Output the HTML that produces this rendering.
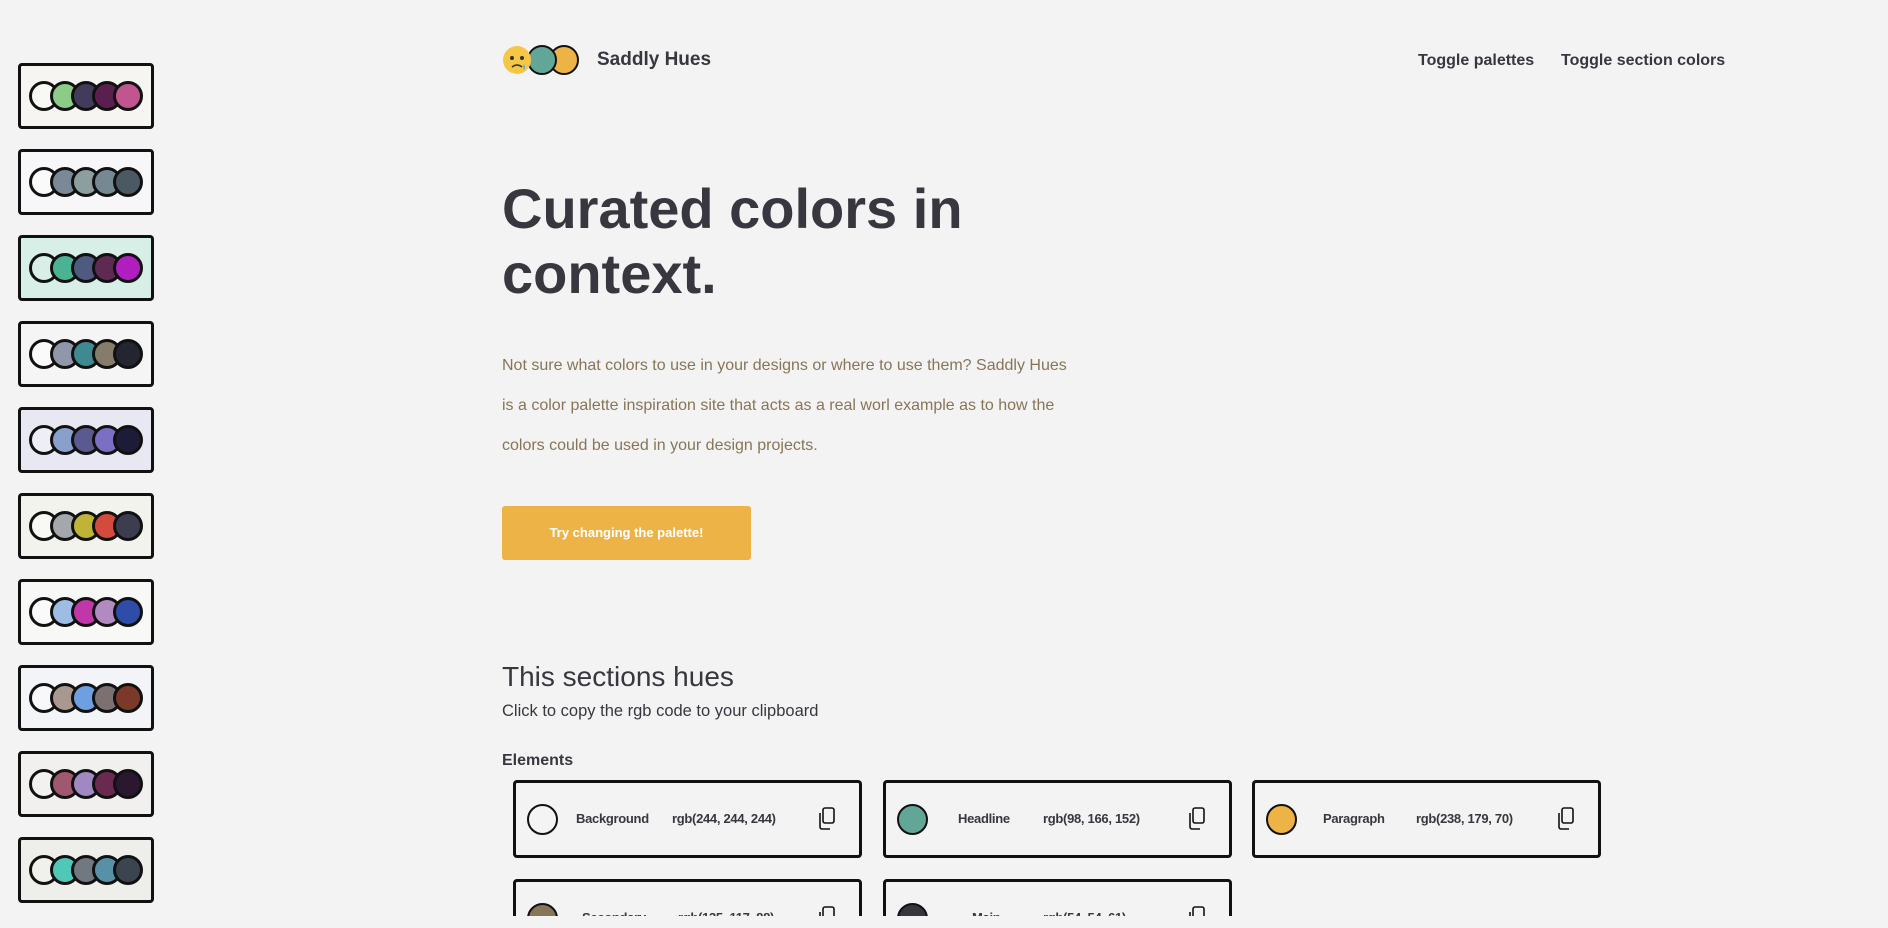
<!DOCTYPE html>
<html><head><meta charset="utf-8"><style>
*{box-sizing:border-box;margin:0;padding:0}
html,body{width:1888px;height:928px;overflow:hidden;background:#f3f3f3;font-family:"Liberation Sans",sans-serif;color:#38363e}
.wrap{position:relative;width:1888px;height:928px;overflow:hidden}
.side{position:absolute;left:18px;top:63px}
.pc{position:absolute;left:0;width:136px;height:66px;border:3.5px solid #111;border-radius:4px}
.pc i{position:absolute;top:15px;width:30px;height:30px;border-radius:50%;border:3px solid #111}
.logo{position:absolute;left:502px;top:44px;width:80px;height:32px}
.title{position:absolute;left:597px;top:49px;font-size:19px;font-weight:bold}
.nav{position:absolute;top:52px;font-size:16px;font-weight:bold}
h1{position:absolute;left:502px;top:176px;font-size:56px;line-height:65px;font-weight:bold;letter-spacing:0;width:700px}
.p{position:absolute;left:502px;top:346px;font-size:16px;line-height:40px;color:#877558;width:580px}
.btn{position:absolute;left:502px;top:506px;width:249px;height:54px;background:#eeb346;border-radius:3px;color:#fff;font-weight:bold;font-size:13px;text-align:center;line-height:54px}
h2{position:absolute;left:502px;top:661px;font-size:28px;font-weight:normal}
.sub{position:absolute;left:502px;top:702px;font-size:16.5px}
.el{position:absolute;left:502px;top:752px;font-size:16px;font-weight:bold}
.cards{position:absolute;left:0;top:0;width:1888px;height:916px;overflow:hidden}
.card{position:absolute;width:349px;height:78px;border:3px solid #111;border-radius:4px}
.card .c{position:absolute;left:11px;top:21px;width:31px;height:31px;border-radius:50%;border:2px solid #111}
.card .n{position:absolute;top:28px;font-size:13px;font-weight:bold;letter-spacing:-0.3px}
.card .cp{position:absolute;right:22px;top:24px;width:20px;height:24px}
</style></head><body><div class="wrap">
<div class="side">
<div class="pc" style="top:0;background:#f6f5f1"><i style="left:8px;background:#f8f8f4"></i><i style="left:29px;background:#8ccc88"></i><i style="left:50px;background:#433a5c"></i><i style="left:71px;background:#5a1f4f"></i><i style="left:92px;background:#c05590"></i></div>
<div class="pc" style="top:86px;background:#f7f7fa"><i style="left:8px;background:#fafafa"></i><i style="left:29px;background:#7b8897"></i><i style="left:50px;background:#8c9ea0"></i><i style="left:71px;background:#768891"></i><i style="left:92px;background:#4a5963"></i></div>
<div class="pc" style="top:172px;background:#d8efe8"><i style="left:8px;background:#d8efe8"></i><i style="left:29px;background:#4ab394"></i><i style="left:50px;background:#4f5a80"></i><i style="left:71px;background:#5e2a52"></i><i style="left:92px;background:#b01ec0"></i></div>
<div class="pc" style="top:258px;background:#f5f5f5"><i style="left:8px;background:#fafafa"></i><i style="left:29px;background:#9097a8"></i><i style="left:50px;background:#3f8a90"></i><i style="left:71px;background:#857c6c"></i><i style="left:92px;background:#232530"></i></div>
<div class="pc" style="top:344px;background:#e8e8f2"><i style="left:8px;background:#eeeef6"></i><i style="left:29px;background:#8aa0cc"></i><i style="left:50px;background:#5a5a90"></i><i style="left:71px;background:#7b6fc4"></i><i style="left:92px;background:#1c1c38"></i></div>
<div class="pc" style="top:430px;background:#f3f3ee"><i style="left:8px;background:#f8f8f4"></i><i style="left:29px;background:#a4a8ac"></i><i style="left:50px;background:#c0b438"></i><i style="left:71px;background:#d44a3c"></i><i style="left:92px;background:#3c3e50"></i></div>
<div class="pc" style="top:516px;background:#f8f8f6"><i style="left:8px;background:#fafafa"></i><i style="left:29px;background:#9ebde4"></i><i style="left:50px;background:#c038a8"></i><i style="left:71px;background:#b08ac0"></i><i style="left:92px;background:#2f4ca8"></i></div>
<div class="pc" style="top:602px;background:#f3f4f7"><i style="left:8px;background:#f8f8fb"></i><i style="left:29px;background:#a89890"></i><i style="left:50px;background:#6ca0e0"></i><i style="left:71px;background:#7c7070"></i><i style="left:92px;background:#7c3828"></i></div>
<div class="pc" style="top:688px;background:#f2f0ee"><i style="left:8px;background:#f3f1ee"></i><i style="left:29px;background:#a05870"></i><i style="left:50px;background:#a088c0"></i><i style="left:71px;background:#6a2a50"></i><i style="left:92px;background:#2a1830"></i></div>
<div class="pc" style="top:774px;background:#eeeeea"><i style="left:8px;background:#f0f0ec"></i><i style="left:29px;background:#50c8b8"></i><i style="left:50px;background:#707880"></i><i style="left:71px;background:#5890a8"></i><i style="left:92px;background:#3c4450"></i></div>
</div>
<svg class="logo" viewBox="0 0 80 32">
<circle cx="62" cy="16" r="14" fill="#eeb346" stroke="#111" stroke-width="2"/>
<circle cx="40" cy="16" r="14" fill="#62a698" stroke="#111" stroke-width="2"/>
<circle cx="15" cy="16" r="14" fill="#f6c646"/>
<circle cx="10" cy="14" r="2" fill="#333"/><circle cx="20" cy="14" r="2" fill="#333"/>
<path d="M10 23 Q15 19 20 23" stroke="#333" stroke-width="1.5" fill="none"/>
<path d="M22 20 q2 4 0 6 q-2-2 0-6z" fill="#5ab0e8"/>
</svg>
<div class="title">Saddly Hues</div>
<div class="nav" style="left:1418px">Toggle palettes</div>
<div class="nav" style="left:1561px">Toggle section colors</div>
<h1>Curated colors in<br>context.</h1>
<div class="p">Not sure what colors to use in your designs or where to use them? Saddly Hues is a color palette inspiration site that acts as a real worl example as to how the colors could be used in your design projects.</div>
<div class="btn">Try changing the palette!</div>
<h2>This sections hues</h2>
<div class="sub">Click to copy the rgb code to your clipboard</div>
<div class="el">Elements</div>
<svg width="0" height="0" style="position:absolute"><defs><symbol id="cp" viewBox="0 0 20 24"><rect x="6" y="1" width="11" height="15" rx="2" fill="none" stroke="#111" stroke-width="1.6"/><path d="M3 6 V20 a2 2 0 0 0 2 2 H13" fill="none" stroke="#111" stroke-width="1.6"/></symbol></defs></svg>
<div class="cards">
<div class="card" style="left:513px;top:780px"><div class="c" style="background:#f4f4f4"></div><div class="n" style="left:60px">Background</div><div class="n" style="left:156px">rgb(244, 244, 244)</div><svg class="cp"><use href="#cp"/></svg></div>
<div class="card" style="left:883px;top:780px"><div class="c" style="background:#62a698"></div><div class="n" style="left:72px">Headline</div><div class="n" style="left:157px">rgb(98, 166, 152)</div><svg class="cp"><use href="#cp"/></svg></div>
<div class="card" style="left:1252px;top:780px"><div class="c" style="background:#eeb346"></div><div class="n" style="left:68px">Paragraph</div><div class="n" style="left:161px">rgb(238, 179, 70)</div><svg class="cp"><use href="#cp"/></svg></div>
<div class="card" style="left:513px;top:879px"><div class="c" style="background:#877558"></div><div class="n" style="left:66px">Secondary</div><div class="n" style="left:162px">rgb(135, 117, 88)</div><svg class="cp"><use href="#cp"/></svg></div>
<div class="card" style="left:883px;top:879px"><div class="c" style="background:#36363d"></div><div class="n" style="left:86px">Main</div><div class="n" style="left:157px">rgb(54, 54, 61)</div><svg class="cp"><use href="#cp"/></svg></div>
</div>
</div></body></html>
